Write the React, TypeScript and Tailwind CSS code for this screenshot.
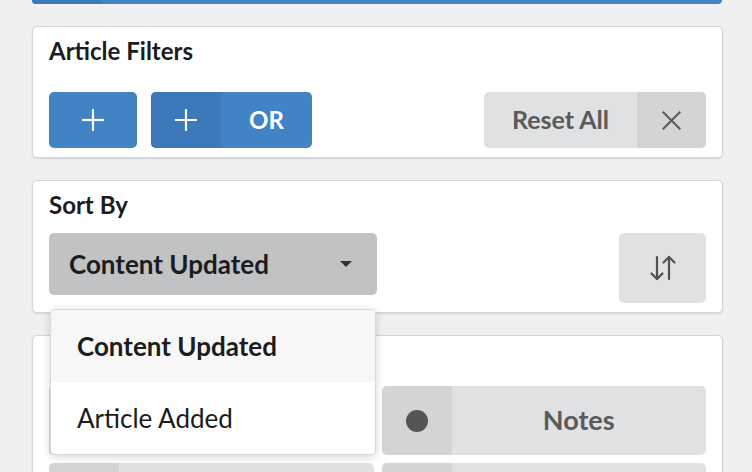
import { useState } from "react";

const font = { fontFamily: "Lato, 'Open Sans', sans-serif" };

function PlusIcon() {
  return (
    <svg width="22" height="22" viewBox="0 0 22 22" fill="none" stroke="currentColor" strokeWidth="2.2" strokeLinecap="square">
      <line x1="11" y1="1" x2="11" y2="21" />
      <line x1="1" y1="11" x2="21" y2="11" />
    </svg>
  );
}

function CloseIcon() {
  return (
    <svg width="19" height="19" viewBox="0 0 19 19" fill="none" stroke="currentColor" strokeWidth="2" strokeLinecap="square">
      <line x1="1.5" y1="1.5" x2="17.5" y2="17.5" />
      <line x1="17.5" y1="1.5" x2="1.5" y2="17.5" />
    </svg>
  );
}

function SortIcon() {
  return (
    <svg width="30" height="28" viewBox="0 0 30 28" fill="none" stroke="currentColor" strokeWidth="2.2" strokeLinecap="round" strokeLinejoin="round">
      <line x1="9" y1="3" x2="9" y2="25" />
      <polyline points="3.5,19.5 9,25 14.5,19.5" />
      <line x1="21" y1="3" x2="21" y2="25" />
      <polyline points="15.5,8.5 21,3 26.5,8.5" />
    </svg>
  );
}

function Card({ title, children }: { title?: string; children: React.ReactNode }) {
  return (
    <div className="rounded-[5px] border border-[#d4d4d5] bg-white px-4 pt-[11px] pb-[9px] shadow-[0_1px_2px_rgba(34,36,38,0.12)]">
      <div className="h-[26px] text-[24px] font-bold leading-[26px] text-[#1b1c1d]">{title}</div>
      {children}
    </div>
  );
}

function ToggleButton({ label }: { label?: string }) {
  return (
    <button type="button" className="flex h-[69px] overflow-hidden rounded-[5px] bg-[#e0e1e2] text-[#5a5a5a]">
      <span className="flex w-[70px] shrink-0 items-center justify-center bg-[#d4d4d5]">
        <span className="h-[22px] w-[22px] rounded-full bg-[#555556]" />
      </span>
      <span className="flex flex-1 items-center justify-center text-[27px] font-bold">{label}</span>
    </button>
  );
}

export default function App() {
  const [sortBy] = useState("Content Updated");
  const options = ["Content Updated", "Article Added"];

  return (
    <div className="h-[472px] w-[752px] overflow-hidden bg-[#eff0f2]" style={font}>
      <div className="ml-[32px] flex h-[4px] w-[690px] overflow-hidden rounded-b-[5px] bg-[#4183c4]">
        <div className="w-[69px] bg-[#3c79bb]" />
      </div>

      <div className="ml-[32px] mt-[22px] flex w-[691px] flex-col gap-[22px]">
        <Card title="Article Filters">
          <div className="mt-[28px] flex items-center">
            <button type="button" className="flex h-[56px] w-[88px] items-center justify-center rounded-[5px] bg-[#4183c4] text-white">
              <PlusIcon />
            </button>
            <button type="button" className="ml-[14px] flex h-[56px] overflow-hidden rounded-[5px] bg-[#4183c4] text-white">
              <span className="flex w-[70px] items-center justify-center bg-[#3c79bb]">
                <PlusIcon />
              </span>
              <span className="flex w-[91px] items-center justify-center text-[24px] font-bold">OR</span>
            </button>
            <button type="button" className="ml-auto flex h-[56px] overflow-hidden rounded-[5px] bg-[#e0e1e2] text-[#5a5a5a]">
              <span className="flex w-[153px] items-center justify-center text-[25px] font-bold">Reset All</span>
              <span className="flex w-[69px] items-center justify-center bg-[#d4d4d5]">
                <CloseIcon />
              </span>
            </button>
          </div>
        </Card>

        <Card title="Sort By">
          <div className="mt-[15px] flex items-start justify-between">
            <div className="relative w-[328px]">
              <button type="button" className="flex h-[62px] w-full items-center rounded-[5px] bg-[#c1c2c4] pl-[20px] pr-[25px] text-left text-[26px] font-bold text-[#1b1c1d]">
                <span className="flex-1">{sortBy}</span>
                <span className="h-0 w-0 border-x-[6px] border-t-[6px] border-x-transparent border-t-[#333]" />
              </button>
              <div className="absolute left-[1px] right-[1px] top-[76px] z-10 overflow-hidden rounded-[5px] border border-[#d8d8d9] bg-white shadow-[0_2px_8px_rgba(34,36,38,0.18)]">
                {options.map((o) => (
                  <div
                    key={o}
                    className={[
                      "flex h-[72px] items-center px-[26px] text-[26px] text-[#1b1c1d]",
                      o === sortBy ? "bg-[#f7f7f7] font-bold" : "bg-white",
                    ].join(" ")}
                  >
                    {o}
                  </div>
                ))}
              </div>
            </div>
            <button type="button" className="flex h-[70px] w-[87px] items-center justify-center rounded-[5px] bg-[#e0e1e2] text-[#505050]">
              <SortIcon />
            </button>
          </div>
        </Card>

        <Card>
          <div className="mt-[13px] grid grid-cols-2 gap-[8px]">
            <ToggleButton />
            <ToggleButton label="Notes" />
            <ToggleButton />
            <ToggleButton />
          </div>
        </Card>
      </div>
    </div>
  );
}
